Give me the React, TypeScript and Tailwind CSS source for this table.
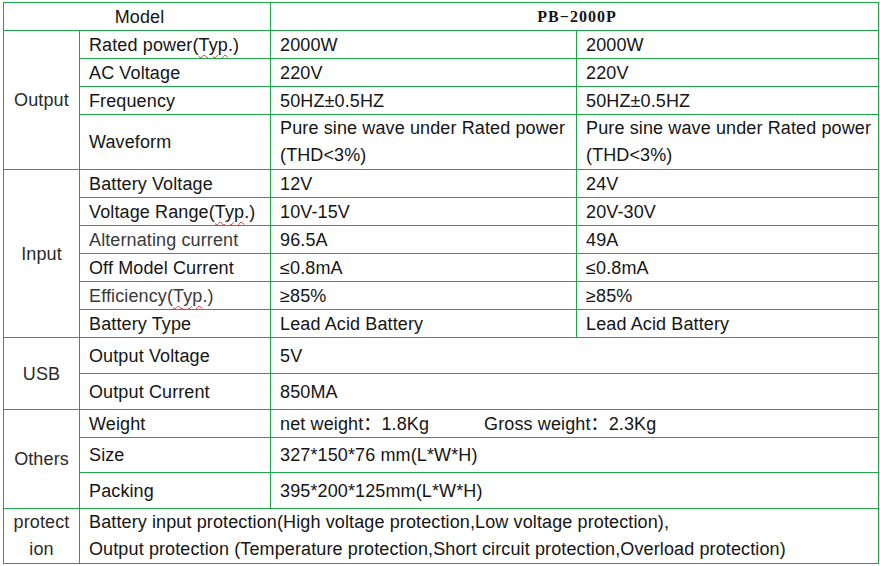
import React from "react";

const Typ = () => (
   <>
      (<span className="underline decoration-wavy decoration-[#e03030] decoration-1 underline-offset-[3px]">Typ</span>.)
   </>
);

const cell = "border border-[#1fa64a] pl-[9px] pr-[4px] py-0 align-middle whitespace-nowrap";
const group = "border border-[#1fa64a] p-0 text-center align-middle text-[#2a2a2a]";

const App = () => {
   return (
      <div className="w-[880px] h-[566px] bg-white pt-[2px] pl-[3px] font-['Liberation_Sans','Noto_Sans_CJK_SC',Arial,sans-serif] text-[18px] leading-[20px] tracking-[0.12px] text-[#151515]">
         <table className="border-collapse table-fixed w-[875px]">
            <colgroup>
               <col className="w-[76px]" />
               <col className="w-[191px]" />
               <col className="w-[306px]" />
               <col className="w-[302px]" />
            </colgroup>
            <tbody>
               <tr className="h-[28px]">
                  <td colSpan={2} className={`${cell} text-center`}>
                     Model
                  </td>
                  <td colSpan={2} className={`${cell} text-center font-['Liberation_Serif',serif] font-bold text-[16px] tracking-[1px]`}>
                     PB−2000P
                  </td>
               </tr>
               <tr className="h-[28px]">
                  <td rowSpan={4} className={group}>
                     Output
                  </td>
                  <td className={cell}>
                     Rated power<Typ />
                  </td>
                  <td className={cell}>2000W</td>
                  <td className={cell}>2000W</td>
               </tr>
               <tr className="h-[28px]">
                  <td className={cell}>AC Voltage</td>
                  <td className={cell}>220V</td>
                  <td className={cell}>220V</td>
               </tr>
               <tr className="h-[28px]">
                  <td className={cell}>Frequency</td>
                  <td className={cell}>50HZ±0.5HZ</td>
                  <td className={cell}>50HZ±0.5HZ</td>
               </tr>
               <tr className="h-[55px]">
                  <td className={cell}>Waveform</td>
                  <td className={`${cell} leading-[27px]`}>
                     Pure sine wave under Rated power
                     <br />
                     (THD&lt;3%)
                  </td>
                  <td className={`${cell} leading-[27px]`}>
                     Pure sine wave under Rated power
                     <br />
                     (THD&lt;3%)
                  </td>
               </tr>
               <tr className="h-[28px]">
                  <td rowSpan={6} className={group}>
                     Input
                  </td>
                  <td className={cell}>Battery Voltage</td>
                  <td className={cell}>12V</td>
                  <td className={cell}>24V</td>
               </tr>
               <tr className="h-[28px]">
                  <td className={cell}>
                     Voltage Range<Typ />
                  </td>
                  <td className={cell}>10V-15V</td>
                  <td className={cell}>20V-30V</td>
               </tr>
               <tr className="h-[28px]">
                  <td className={`${cell} text-[#3a3a3a]`}>Alternating current</td>
                  <td className={cell}>96.5A</td>
                  <td className={cell}>49A</td>
               </tr>
               <tr className="h-[28px]">
                  <td className={cell}>Off Model Current</td>
                  <td className={cell}>≤0.8mA</td>
                  <td className={cell}>≤0.8mA</td>
               </tr>
               <tr className="h-[28px]">
                  <td className={`${cell} text-[#3a3a3a]`}>
                     Efficiency<Typ />
                  </td>
                  <td className={cell}>≥85%</td>
                  <td className={cell}>≥85%</td>
               </tr>
               <tr className="h-[28px]">
                  <td className={cell}>Battery Type</td>
                  <td className={cell}>Lead Acid Battery</td>
                  <td className={cell}>Lead Acid Battery</td>
               </tr>
               <tr className="h-[36px]">
                  <td rowSpan={2} className={group}>
                     USB
                  </td>
                  <td className={cell}>Output Voltage</td>
                  <td colSpan={2} className={cell}>
                     5V
                  </td>
               </tr>
               <tr className="h-[36px]">
                  <td className={cell}>Output Current</td>
                  <td colSpan={2} className={cell}>
                     850MA
                  </td>
               </tr>
               <tr className="h-[28px]">
                  <td rowSpan={3} className={group}>
                     Others
                  </td>
                  <td className={cell}>Weight</td>
                  <td colSpan={2} className={cell}>
                     net weight：1.8Kg
                     <span className="ml-[55px]">Gross weight：2.3Kg</span>
                  </td>
               </tr>
               <tr className="h-[35px]">
                  <td className={cell}>Size</td>
                  <td colSpan={2} className={cell}>
                     327*150*76 mm(L*W*H)
                  </td>
               </tr>
               <tr className="h-[36px]">
                  <td className={cell}>Packing</td>
                  <td colSpan={2} className={cell}>
                     395*200*125mm(L*W*H)
                  </td>
               </tr>
               <tr className="h-[54px]">
                  <td className={`${group} leading-[27px]`}>
                     protect
                     <br />
                     ion
                  </td>
                  <td colSpan={3} className={`${cell} leading-[27px]`}>
                     Battery input protection(High voltage protection,Low voltage protection),
                     <br />
                     Output protection (Temperature protection,Short circuit protection,Overload protection)
                  </td>
               </tr>
            </tbody>
         </table>
      </div>
   );
};

export default App;
